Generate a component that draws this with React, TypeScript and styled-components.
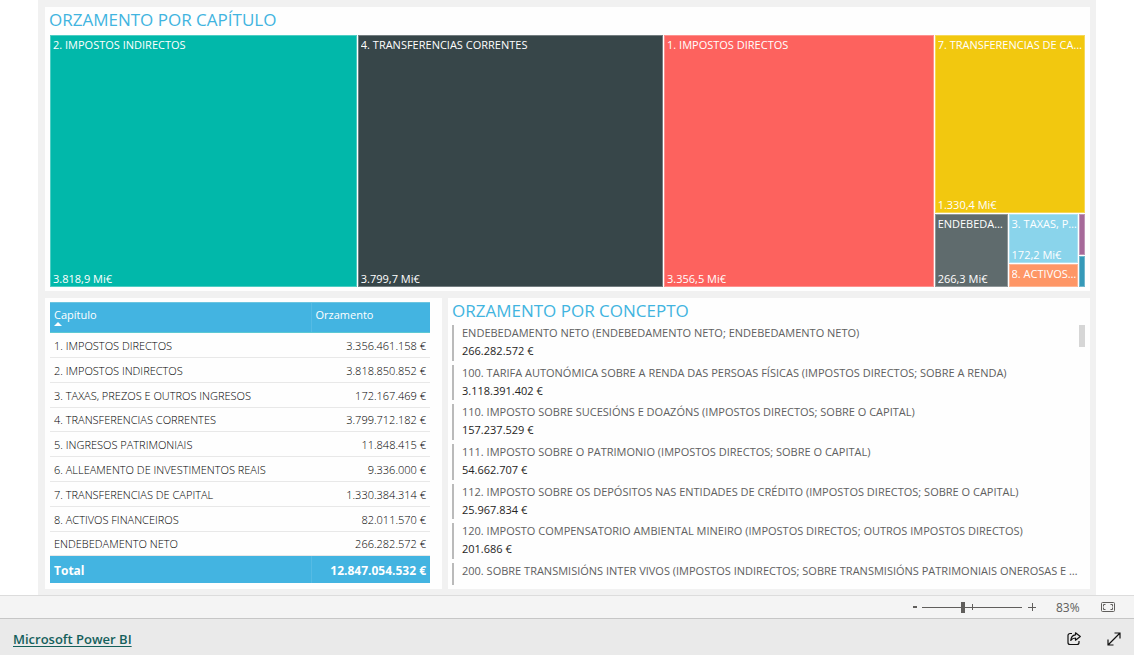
import React from 'react';
import styled, { createGlobalStyle } from 'styled-components';

const GlobalStyle = createGlobalStyle`
  *, *::before, *::after { box-sizing: border-box; }
  body {
    margin: 0;
    background: #fff;
    color: #252423;
    font-family: 'Open Sans', 'Noto Sans', sans-serif;
    font-size: 11px;
  }
  h2, p, ul, dl, dt, dd { margin: 0; padding: 0; }
`;

const Page = styled.div`
  display: flex;
  flex-direction: column;
  min-height: 100vh;
`;

const Report = styled.main`
  display: flex;
  flex-direction: column;
  gap: 7px;
  margin: 0 38px;
  padding: 7px 6px 6px 7px;
  background: #f1f1f1;
`;

const Panel = styled.section`
  min-width: 0;
  padding: 0 5px 4px 4px;
  background: #fefefe;
`;

const LowerRow = styled.div`
  display: grid;
  grid-template-columns: minmax(0, 397fr) minmax(0, 642fr);
  gap: 6px;
  height: 291px;
`;

const Title = styled.h2`
  color: #41b4e0;
  font-size: 17px;
  font-weight: 400;
  line-height: 26px;
`;

const Treemap = styled.div`
  display: flex;
  gap: 1px;
  height: 252px;
  margin: 2px 0 0 1px;
`;

const Split = styled.div<{ $weight: number; $column?: boolean }>`
  display: flex;
  flex: ${(p) => p.$weight} 1 0;
  flex-direction: ${(p) => (p.$column ? 'column' : 'row')};
  gap: 1px;
  min-width: 0;
  min-height: 0;
`;

const Tile = styled.div<{ $weight: number; $color: string }>`
  display: flex;
  flex: ${(p) => p.$weight} 1 0;
  flex-direction: column;
  justify-content: space-between;
  min-width: 0;
  min-height: 0;
  overflow: hidden;
  background: ${(p) => p.$color};
  box-shadow: inset 0 0 0 1px rgba(255, 255, 255, 0.3);
  color: #fff;
`;

const Sliver = styled.div<{ $weight: number; $color: string }>`
  flex: ${(p) => p.$weight} 1 0;
  background: ${(p) => p.$color};
  box-shadow: inset 0 0 0 1px rgba(255, 255, 255, 0.3);
`;

const Label = styled.span`
  margin: 2px 1px 0 3px;
  overflow: hidden;
  line-height: 16px;
  text-overflow: ellipsis;
  white-space: nowrap;
`;

const Table = styled.table`
  width: calc(100% - 8px);
  margin: 4px 0 0 1px;
  border-collapse: collapse;
  table-layout: fixed;
  line-height: 15px;
`;

const HeadCell = styled.th<{ $width?: string }>`
  width: ${(p) => p.$width ?? 'auto'};
  height: 30px;
  padding: 4px 4px 0;
  border-top: 1px solid #6cc5e0;
  border-bottom: 1px solid #5cc8d4;
  background: #43b4e1;
  color: #fff;
  font-weight: 400;
  text-align: left;
  vertical-align: top;

  & + & { border-left: 1px solid #55bbe4; }
`;

const SortMark = styled.svg`
  display: block;
`;

const Row = styled.tr`
  height: 25px;

  &:nth-child(5n + 4) { height: 24px; }
`;

const Cell = styled.td<{ $number?: boolean }>`
  padding: 0 4px;
  border-bottom: 1px solid #e8e8e8;
  color: #000;
  font-weight: 350;
  text-align: ${(p) => (p.$number ? 'right' : 'left')};
`;

const TotalCell = styled.td<{ $number?: boolean }>`
  height: 27px;
  padding: 2px 4px 0;
  border-top: 1px solid #14b8ab;
  background: #43b4e1;
  color: #fff;
  font-size: 12px;
  font-weight: 700;
  text-align: ${(p) => (p.$number ? 'right' : 'left')};

  & + & { border-left: 1px solid #55bbe4; }
`;

const CardArea = styled.div`
  display: flex;
  justify-content: space-between;
  height: 260px;
  margin-top: 1px;
  overflow: hidden;
`;

const Cards = styled.dl`
  flex: 1;
  display: flex;
  flex-direction: column;
  gap: 4px;
  min-width: 0;
`;

const Card = styled.div`
  flex: none;
  height: 36px;
  padding-left: 8px;
  border-left: 2px solid #bababa;

  &:nth-child(3n + 2) { height: 35px; }
`;

const CardName = styled.dt`
  overflow: hidden;
  color: #606060;
  font-weight: 500;
  line-height: 15px;
  text-overflow: ellipsis;
  white-space: nowrap;
`;

const CardValue = styled.dd`
  line-height: 21px;
`;

const ScrollThumb = styled.div`
  width: 6px;
  height: 22px;
  background: #d6d6d6;
`;

const ZoomBar = styled.div`
  display: flex;
  align-items: center;
  justify-content: flex-end;
  height: 24px;
  padding-right: 19px;
  border-top: 1px solid #dcdcdc;
  border-bottom: 1px solid #c6c6c6;
  background: #f4f4f4;
  color: #605e5c;
  font-size: 12px;
`;

const IconButton = styled.button`
  display: flex;
  align-items: center;
  justify-content: center;
  padding: 0;
  border: 0;
  background: none;
  color: inherit;
  cursor: pointer;
`;

const StepButton = styled(IconButton)`
  width: 14px;
  height: 20px;
`;

const Slider = styled.input`
  width: 100px;
  height: 16px;
  margin: 0 3px 0 0;
  appearance: none;
  background:
    linear-gradient(#605e5c, #605e5c) 50px 50% / 1px 6px no-repeat,
    linear-gradient(#605e5c, #605e5c) 0 50% / 100% 1px no-repeat;

  &::-webkit-slider-thumb {
    appearance: none;
    width: 4px;
    height: 11px;
    background: #605e5c;
  }
`;

const Percent = styled.output`
  width: 62px;
  padding-left: 17px;
`;

const Footer = styled.footer`
  display: flex;
  flex: 1;
  align-items: center;
  justify-content: space-between;
  min-height: 36px;
  padding: 3px 12px 0 13px;
  background: #eaeaea;
  color: #111;
`;

const BrandLink = styled.a`
  color: #15605c;
  font-size: 13px;
  font-weight: 600;
  line-height: 20px;
  text-underline-offset: 2px;
`;

const Actions = styled.div`
  display: flex;
  gap: 24px;
`;

const rows = [
  ['1. IMPOSTOS DIRECTOS', '3.356.461.158 €'],
  ['2. IMPOSTOS INDIRECTOS', '3.818.850.852 €'],
  ['3. TAXAS, PREZOS E OUTROS INGRESOS', '172.167.469 €'],
  ['4. TRANSFERENCIAS CORRENTES', '3.799.712.182 €'],
  ['5. INGRESOS PATRIMONIAIS', '11.848.415 €'],
  ['6. ALLEAMENTO DE INVESTIMENTOS REAIS', '9.336.000 €'],
  ['7. TRANSFERENCIAS DE CAPITAL', '1.330.384.314 €'],
  ['8. ACTIVOS FINANCEIROS', '82.011.570 €'],
  ['ENDEBEDAMENTO NETO', '266.282.572 €'],
];

const concepts = [
  ['ENDEBEDAMENTO NETO (ENDEBEDAMENTO NETO; ENDEBEDAMENTO NETO)', '266.282.572 €'],
  ['100. TARIFA AUTONÓMICA SOBRE A RENDA DAS PERSOAS FÍSICAS (IMPOSTOS DIRECTOS; SOBRE A RENDA)', '3.118.391.402 €'],
  ['110. IMPOSTO SOBRE SUCESIÓNS E DOAZÓNS (IMPOSTOS DIRECTOS; SOBRE O CAPITAL)', '157.237.529 €'],
  ['111. IMPOSTO SOBRE O PATRIMONIO (IMPOSTOS DIRECTOS; SOBRE O CAPITAL)', '54.662.707 €'],
  ['112. IMPOSTO SOBRE OS DEPÓSITOS NAS ENTIDADES DE CRÉDITO (IMPOSTOS DIRECTOS; SOBRE O CAPITAL)', '25.967.834 €'],
  ['120. IMPOSTO COMPENSATORIO AMBIENTAL MINEIRO (IMPOSTOS DIRECTOS; OUTROS IMPOSTOS DIRECTOS)', '201.686 €'],
];

export default function App() {
  return (
    <Page>
      <GlobalStyle />
      <Report>
        <Panel>
          <Title>ORZAMENTO POR CAPÍTULO</Title>
          <Treemap>
            <Tile $weight={3819} $color="#01b8aa">
              <Label>2. IMPOSTOS INDIRECTOS</Label>
              <Label>3.818,9 Mi€</Label>
            </Tile>
            <Tile $weight={3800} $color="#374649">
              <Label>4. TRANSFERENCIAS CORRENTES</Label>
              <Label>3.799,7 Mi€</Label>
            </Tile>
            <Tile $weight={3356} $color="#fd625e">
              <Label>1. IMPOSTOS DIRECTOS</Label>
              <Label>3.356,5 Mi€</Label>
            </Tile>
            <Split $weight={1872} $column>
              <Tile $weight={1330} $color="#f2c80f">
                <Label>7. TRANSFERENCIAS DE CAPITAL</Label>
                <Label>1.330,4 Mi€</Label>
              </Tile>
              <Split $weight={542}>
                <Tile $weight={266} $color="#5f6b6d">
                  <Label>ENDEBEDAMENTO NETO</Label>
                  <Label>266,3 Mi€</Label>
                </Tile>
                <Split $weight={254} $column>
                  <Tile $weight={172} $color="#8ad4eb">
                    <Label>3. TAXAS, PREZOS E OUTROS INGRESOS</Label>
                    <Label>172,2 Mi€</Label>
                  </Tile>
                  <Tile $weight={82} $color="#fe9666">
                    <Label>8. ACTIVOS FINANCEIROS</Label>
                  </Tile>
                </Split>
                <Split $weight={21} $column>
                  <Sliver $weight={12} $color="#a66999" />
                  <Sliver $weight={9} $color="#3599b8" />
                </Split>
              </Split>
            </Split>
          </Treemap>
        </Panel>
        <LowerRow>
          <Panel>
            <Table>
              <thead>
                <tr>
                  <HeadCell>
                    Capítulo
                    <SortMark width="8" height="4" viewBox="0 0 8 4" aria-hidden="true">
                      <path d="M0 4L4 0l4 4z" fill="#fff" />
                    </SortMark>
                  </HeadCell>
                  <HeadCell $width="119px">Orzamento</HeadCell>
                </tr>
              </thead>
              <tbody>
                {rows.map(([name, value]) => (
                  <Row key={name}>
                    <Cell>{name}</Cell>
                    <Cell $number>{value}</Cell>
                  </Row>
                ))}
              </tbody>
              <tfoot>
                <tr>
                  <TotalCell>Total</TotalCell>
                  <TotalCell $number>12.847.054.532 €</TotalCell>
                </tr>
              </tfoot>
            </Table>
          </Panel>
          <Panel>
            <Title>ORZAMENTO POR CONCEPTO</Title>
            <CardArea>
              <Cards>
                {concepts.map(([name, value]) => (
                  <Card key={name}>
                    <CardName>{name}</CardName>
                    <CardValue>{value}</CardValue>
                  </Card>
                ))}
                <Card>
                  <CardName>
                    200. SOBRE TRANSMISIÓNS INTER VIVOS (IMPOSTOS INDIRECTOS; SOBRE TRANSMISIÓNS PATRIMONIAIS ONEROSAS E ACTOS XURÍDICOS DOCUMENTADOS)
                  </CardName>
                </Card>
              </Cards>
              <ScrollThumb />
            </CardArea>
          </Panel>
        </LowerRow>
      </Report>
      <ZoomBar>
        <StepButton aria-label="Reducir">
          <svg width="14" height="14" viewBox="0 0 14 14"><path d="M5 7h4" stroke="currentColor" strokeWidth="2" /></svg>
        </StepButton>
        <Slider type="range" min={0} max={100} defaultValue={41} aria-label="Zoom" />
        <StepButton aria-label="Ampliar">
          <svg width="14" height="14" viewBox="0 0 14 14"><path d="M3 7.500h8M7.500 3v8" stroke="currentColor" /></svg>
        </StepButton>
        <Percent>83%</Percent>
        <IconButton aria-label="Axustar á páxina">
          <svg width="14" height="10" viewBox="0 0 14 10" fill="none" stroke="currentColor">
            <rect x=".5" y=".5" width="13" height="9" rx="1" />
            <path d="M4.500 2.500h-2v2M2.500 5.500v2h2M9.500 2.500h2v2M11.500 5.500v2h-2" />
          </svg>
        </IconButton>
      </ZoomBar>
      <Footer>
        <BrandLink href="#powerbi">Microsoft Power BI</BrandLink>
        <Actions>
          <IconButton aria-label="Compartir">
            <svg width="16" height="16" viewBox="0 0 16 16" fill="none" stroke="currentColor" strokeWidth="1.200" strokeLinejoin="round">
              <path d="M6 2.500H4a2 2 0 0 0-2 2v7a2 2 0 0 0 2 2h7a2 2 0 0 0 2-2V10" />
              <path d="M9.500 1.800v2C6.500 4 5 6.500 4.800 9.500c1.200-1.800 2.700-2.500 4.700-2.500v2.200L14.300 5.500z" />
            </svg>
          </IconButton>
          <IconButton aria-label="Pantalla completa">
            <svg width="16" height="16" viewBox="0 0 16 16" fill="none" stroke="currentColor" strokeWidth="1.200">
              <path d="M8.500 2h5.500v5.500M2 8.500V14h5.500M14 2L2 14" />
            </svg>
          </IconButton>
        </Actions>
      </Footer>
    </Page>
  );
}
